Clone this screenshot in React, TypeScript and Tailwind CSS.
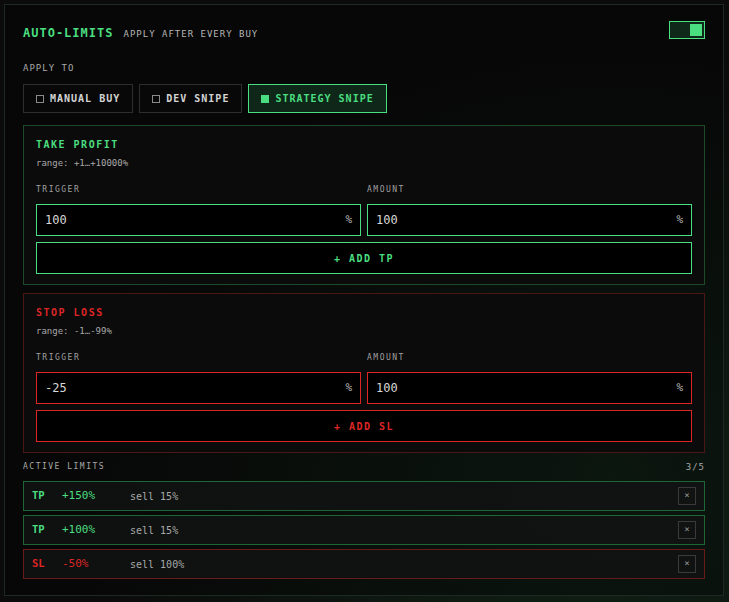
import React from "react";

const mono = { fontFamily: '"DejaVu Sans Mono", "Liberation Mono", monospace' };

function ApplyBtn({ label, active }: { label: string; active?: boolean }) {
  return (
    <div
      className={
        "flex h-[29px] items-center gap-[6px] border pl-[12px] pr-[12px] text-[10px] font-bold tracking-[1px] " +
        (active
          ? "border-[#4ade80] bg-[#0e2718] text-[#4ade80]"
          : "border-[#2e2e2e] bg-[#080808] text-[#d4d4d4]")
      }
    >
      <span
        className={
          "block h-[8px] w-[8px] border " +
          (active ? "border-[#4ade80] bg-[#4ade80]" : "border-[#8a8a8a]")
        }
      />
      <span>{label}</span>
    </div>
  );
}

function Section({ kind }: { kind: "tp" | "sl" }) {
  const tp = kind === "tp";
  const accent = tp ? "text-[#4ade80]" : "text-[#dc2626]";
  const inputBorder = tp ? "border-[#4ade80]" : "border-[#dc2626]";
  return (
    <div
      className={
        "h-[160px] border bg-[#0b0b0b] px-[12px] pt-[12px] " +
        (tp ? "border-[#1d4a2b]" : "border-[#4a1616]")
      }
    >
      <div className={"h-[14px] text-[10px] font-bold leading-[14px] tracking-[1.5px] " + accent}>
        {tp ? "TAKE PROFIT" : "STOP LOSS"}
      </div>
      <div className="mt-[5px] h-[12px] text-[9px] leading-[12px] text-[#a8a8a8]">
        {tp ? "range: +1…+10000%" : "range: -1…-99%"}
      </div>
      <div className="mt-[15px] grid grid-cols-2 gap-x-[6px]">
        <div className="h-[12px] text-[8px] leading-[12px] tracking-[1.5px] text-[#a0a0a0]">TRIGGER</div>
        <div className="h-[12px] text-[8px] leading-[12px] tracking-[1.5px] text-[#a0a0a0]">AMOUNT</div>
        <div className={"mt-[8px] flex h-[32px] items-center justify-between border bg-black pl-[8px] pr-[8px] " + inputBorder}>
          <span className="text-[12px] text-[#d8d8d8]">{tp ? "100" : "-25"}</span>
          <span className="text-[11px] text-[#bdbdbd]">%</span>
        </div>
        <div className={"mt-[8px] flex h-[32px] items-center justify-between border bg-black pl-[8px] pr-[8px] " + inputBorder}>
          <span className="text-[12px] text-[#d8d8d8]">100</span>
          <span className="text-[11px] text-[#bdbdbd]">%</span>
        </div>
      </div>
      <div
        className={
          "mt-[6px] flex h-[32px] items-center justify-center border bg-black text-[10px] font-bold tracking-[1.5px] " +
          inputBorder +
          " " +
          accent
        }
      >
        {tp ? "+ ADD TP" : "+ ADD SL"}
      </div>
    </div>
  );
}

function LimitRow({ type, value, sell }: { type: "TP" | "SL"; value: string; sell: string }) {
  const tp = type === "TP";
  return (
    <div
      className={
        "flex h-[30px] items-center border bg-[#111312]/90 pl-[8px] pr-[8px] " +
        (tp ? "border-[#1f6636]" : "border-[#6b1a1a]")
      }
    >
      <span className={"w-[30px] text-[10.5px] font-bold " + (tp ? "text-[#4ade80]" : "text-[#dc2626]")}>{type}</span>
      <span className={"w-[68px] text-[11px] " + (tp ? "text-[#4ade80]" : "text-[#dc2626]")}>{value}</span>
      <span className="flex-1 text-[10px] text-[#a8a8a8]">{sell}</span>
      <span className="flex h-[18px] w-[18px] items-center justify-center border border-[#3a3a3a] text-[9px] text-[#9a9a9a]">
        ×
      </span>
    </div>
  );
}

export default function App() {
  return (
    <div
      style={mono}
      className="min-h-[602px] w-[729px] bg-[#0b0b0b] bg-[radial-gradient(ellipse_at_80%_85%,rgba(34,120,60,0.2),transparent_60%)] pb-[4px] pl-[4px] pr-[5px] pt-[4px]"
    >
      <div className="border border-[#1c2a21] bg-[#070707] bg-[radial-gradient(ellipse_at_85%_80%,rgba(34,110,60,0.15),transparent_65%)] px-[18px] pb-[16px] pt-[16px]">
        <div className="flex h-[18px] items-center justify-between">
          <div className="flex items-baseline gap-[10px] pt-[5px]">
            <span className="text-[12px] font-bold tracking-[1px] text-[#4ade80]">AUTO-LIMITS</span>
            <span className="text-[9px] tracking-[1px] text-[#b5b5b5]">APPLY AFTER EVERY BUY</span>
          </div>
          <div className="flex h-[18px] w-[36px] items-center justify-end border border-[#4ade80] bg-[#10281a] pr-[2px]">
            <span className="block h-[12px] w-[12px] bg-[#4ade80]" />
          </div>
        </div>

        <div className="mt-[23px] h-[12px] text-[9px] leading-[12px] tracking-[1px] text-[#a8a8a8]">APPLY TO</div>

        <div className="mt-[10px] flex gap-[6px]">
          <ApplyBtn label="MANUAL BUY" />
          <ApplyBtn label="DEV SNIPE" />
          <ApplyBtn label="STRATEGY SNIPE" active />
        </div>

        <div className="mt-[12px] flex flex-col gap-[8px]">
          <Section kind="tp" />
          <Section kind="sl" />
        </div>

        <div className="mt-[8px] flex h-[12px] items-center justify-between text-[8px] leading-[12px] tracking-[1.5px] text-[#a8a8a8]">
          <span>ACTIVE LIMITS</span>
          <span className="text-[9px] tracking-[1px]">3/5</span>
        </div>

        <div className="mt-[8px] flex flex-col gap-[4px]">
          <LimitRow type="TP" value="+150%" sell="sell 15%" />
          <LimitRow type="TP" value="+100%" sell="sell 15%" />
          <LimitRow type="SL" value="-50%" sell="sell 100%" />
        </div>
      </div>
    </div>
  );
}
